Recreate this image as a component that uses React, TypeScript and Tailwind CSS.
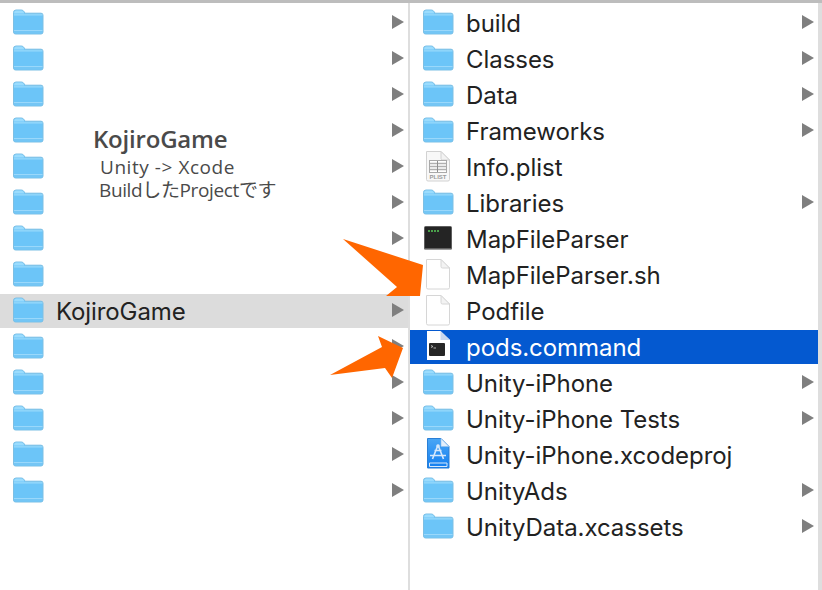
import React from 'react';

const leftRows = [0, 1, 2, 3, 4, 5, 6, 7, 8, 9, 10, 11, 12, 13];
const noArrowLeft = [7];

const rightRows = [
  { name: 'build', icon: 'folder', arrow: true },
  { name: 'Classes', icon: 'folder', arrow: true },
  { name: 'Data', icon: 'folder', arrow: true },
  { name: 'Frameworks', icon: 'folder', arrow: true },
  { name: 'Info.plist', icon: 'plist', arrow: false },
  { name: 'Libraries', icon: 'folder', arrow: true },
  { name: 'MapFileParser', icon: 'exec', arrow: false },
  { name: 'MapFileParser.sh', icon: 'doc', arrow: false },
  { name: 'Podfile', icon: 'doc', arrow: false },
  { name: 'pods.command', icon: 'command', arrow: false },
  { name: 'Unity-iPhone', icon: 'folder', arrow: true },
  { name: 'Unity-iPhone Tests', icon: 'folder', arrow: true },
  { name: 'Unity-iPhone.xcodeproj', icon: 'xcode', arrow: false },
  { name: 'UnityAds', icon: 'folder', arrow: true },
  { name: 'UnityData.xcassets', icon: 'folder', arrow: true },
];

const FolderIcon = () => (
  <svg width="32" height="26" viewBox="0 0 32 26" className="shrink-0">
    <path d="M1.5 3.5 Q1.5 1 4 1 H9.5 Q11 1 12 2.6 L13.2 4.2 H29 Q31 4.2 31 6.2 V23 Q31 25 29 25 H3.5 Q1.5 25 1.5 23 Z" fill="#6cc5f8" stroke="#7cbfe4" strokeWidth="1" />
    <path d="M2 4 Q2 1.5 4 1.5 H9.5 Q10.8 1.5 11.6 3 L12.4 4.6 H2 Z" fill="#9bdcfd" />
    <rect x="2" y="5.4" width="28.5" height="1" fill="#a5dffc" />
    <rect x="2" y="21" width="28.5" height="1" fill="#9ad8fb" />
    <path d="M2 22 H30.5 V23 Q30.5 24.5 29 24.5 H3.5 Q2 24.5 2 23 Z" fill="#74c6f5" />
  </svg>
);

const DocIcon = ({ children, fill = '#ffffff', line = '#d6d6d6' }: { children?: React.ReactNode; fill?: string; line?: string }) => (
  <svg width="32" height="34" viewBox="0 0 32 34" className="shrink-0">
    <path d="M4.5 2.5 H19 L27.5 11 V30.5 Q27.5 32 26 32 H6 Q4.5 32 4.5 30.5 Z" fill={fill} stroke={line} strokeWidth="1" />
    <path d="M19 2.5 V9.5 Q19 11 20.5 11 H27.5 Z" fill="#f3f3f3" stroke={line} strokeWidth="1" />
    {children}
  </svg>
);

const PlistIcon = () => (
  <DocIcon fill="#f8f8f8" line="#d2d2d2">
    <rect x="7.5" y="11.5" width="17" height="12" fill="#ffffff" stroke="#a9a9a9" strokeWidth="1" />
    <path d="M8 14.5 H24 M8 17.5 H24 M8 20.5 H24" stroke="#b0b0b0" strokeWidth="1.4" />
    <path d="M15.5 12 V23" stroke="#8f8f8f" strokeWidth="1" />
    <text x="16" y="30" textAnchor="middle" fontSize="6" fontWeight="700" fill="#9a9a9a" fontFamily="Liberation Sans, sans-serif">PLIST</text>
  </DocIcon>
);

const ExecIcon = () => (
  <svg width="32" height="26" viewBox="0 0 32 26" className="shrink-0">
    <rect x="2.5" y="1.5" width="27" height="23" rx="1" fill="#242424" stroke="#5e5e5e" strokeWidth="1" />
    <rect x="3" y="23.5" width="26" height="1.5" fill="#9c9c9c" />
    <path d="M6 6 H8 M9 6 H11 M12 6 H14 M15 6 H17" stroke="#4aa04a" strokeWidth="2" />
  </svg>
);

const CommandIcon = () => (
  <svg width="32" height="34" viewBox="0 0 32 34" className="shrink-0">
    <path d="M5 2 H18.5 L28 11 V31 H5 Z" fill="#ffffff" />
    <path d="M18.5 2 V11 H28 Z" fill="#c9d8ee" />
    <rect x="7" y="14" width="16" height="13" rx="1" fill="#262626" />
    <path d="M9 16.5 L11 17.5 L9 18.5 M11.5 19 H14" stroke="#d0d0d0" strokeWidth="0.8" fill="none" />
  </svg>
);

const XcodeIcon = () => (
  <svg width="32" height="34" viewBox="0 0 32 34" className="shrink-0">
    <defs>
      <linearGradient id="xcodeFill" x1="0" y1="0" x2="0" y2="1">
        <stop offset="0" stopColor="#4aa6f5" />
        <stop offset="1" stopColor="#127ef0" />
      </linearGradient>
    </defs>
    <path d="M5.5 1.5 H19 L27 9.5 V31 H5.5 Z" fill="url(#xcodeFill)" stroke="#2a7fd6" strokeWidth="1" />
    <path d="M19 1.5 V9.5 H27 Z" fill="#e4effb" stroke="#8dbdec" strokeWidth="0.6" />
    <path d="M7.5 26 H25 V29.5 H7.5 Z" fill="none" stroke="#d8e9fb" strokeWidth="1" />
    <path d="M16 8 L10.5 22 M16 8 L21.5 22 M8 18.5 H24 M12.5 13.5 H19.5" stroke="#d6e8fb" strokeWidth="1.6" fill="none" />
    <circle cx="16" cy="9" r="1.8" fill="#d6e8fb" />
  </svg>
);

const Chevron = () => (
  <div className="w-0 h-0 -mt-[2px] border-y-[7px] border-y-transparent border-l-[12px] border-l-[#7f7f7f]" />
);

const renderIcon = (icon: string) => {
  if (icon === 'folder') return <FolderIcon />;
  if (icon === 'plist') return <PlistIcon />;
  if (icon === 'exec') return <ExecIcon />;
  if (icon === 'doc') return <DocIcon />;
  if (icon === 'command') return <CommandIcon />;
  return <XcodeIcon />;
};

export default function App() {
  return (
    <div className="relative w-[822px] h-[590px] overflow-hidden bg-white font-['Inter','Liberation_Sans',sans-serif] text-[#222222]">
      {/* window top edge */}
      <div className="h-[3px] bg-[#bdbdbd]" />
      <div className="flex h-[587px] pt-px">
        {/* left column */}
        <div className="w-[408px] shrink-0">
          {leftRows.map((i) => (
            <div key={i} className="h-9 pt-[2px]">
              <div className={`flex items-center h-[34px] pl-[12px] pr-[4px] ${i === 8 ? 'bg-[#dcdcdc]' : ''}`}>
                <div className="-mt-[2px]"><FolderIcon /></div>
                <span className="ml-[12px] mt-[2px] text-[24px] tracking-[-0.1px] flex-1">{i === 8 ? 'KojiroGame' : ''}</span>
                {!noArrowLeft.includes(i) && <Chevron />}
              </div>
            </div>
          ))}
        </div>
        <div className="w-[2px] shrink-0 bg-[#dedede] -mt-px" />
        {/* right column */}
        <div className="w-[408px] shrink-0">
          {rightRows.map((r) => {
            const selected = r.name === 'pods.command';
            return (
              <div key={r.name} className="h-9 pt-[2px]">
                <div className={`flex items-center h-[34px] pl-[12px] pr-[4px] ${selected ? 'bg-[#0459d0] text-white' : ''}`}>
                  <div className="-mt-[2px]">{renderIcon(r.icon)}</div>
                  <span className="ml-[12px] mt-[2px] text-[24px] tracking-[-0.05px] flex-1 whitespace-nowrap">{r.name}</span>
                  {r.arrow && <Chevron />}
                </div>
              </div>
            );
          })}
        </div>
        <div className="w-[4px] shrink-0 bg-[#dedede] -mt-px" />
      </div>

      {/* annotation text */}
      <div className="absolute left-[93px] top-[124px] font-['Open_Sans','Noto_Sans_CJK_JP',sans-serif] text-[#4a4a4a]">
        <div className="text-[24px] font-semibold leading-[30px] tracking-[-0.2px]">KojiroGame</div>
        <div className="ml-[7px] mt-px text-[19px] leading-[24px] tracking-[0.55px]">Unity -&gt; Xcode</div>
        <div className="ml-[6px] text-[19px] leading-[22px] tracking-[-0.37px] whitespace-nowrap">BuildしたProjectです</div>
      </div>

      {/* orange arrows */}
      <svg width="822" height="590" viewBox="0 0 822 590" className="absolute inset-0 pointer-events-none">
        <polygon points="343,239 423,265 420,296 386,296 397,287" fill="#ff6600" />
        <polygon points="330,375 382,347 378,336 403,348 392,378 385,368" fill="#ff6600" />
      </svg>
    </div>
  );
}
